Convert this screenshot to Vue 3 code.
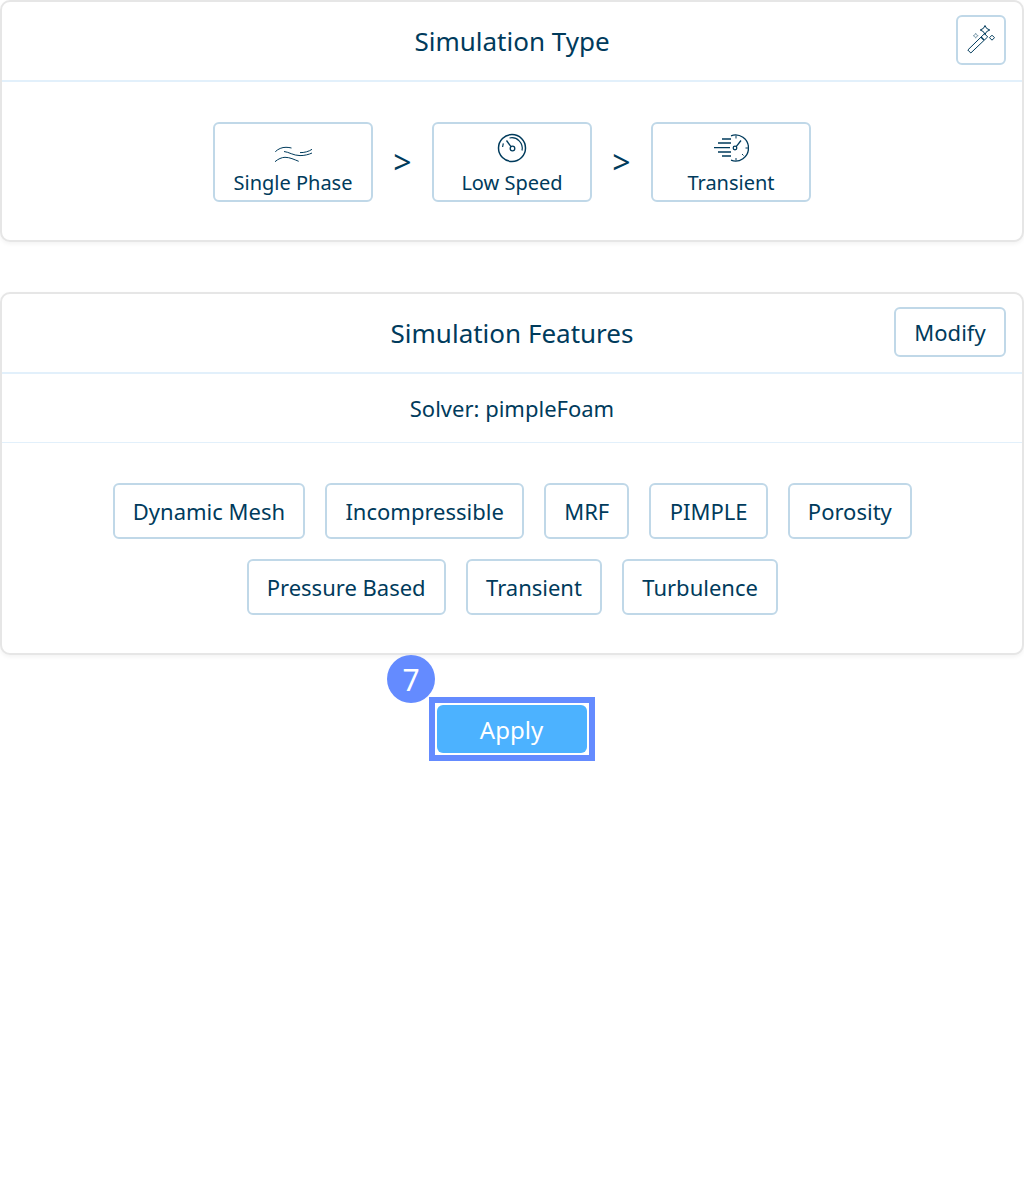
<template>
  <div class="page">
    <section class="card">
      <header class="card-head">
        <h2>Simulation Type</h2>
        <button class="head-btn icon-btn" title="Wizard">
          <svg width="28" height="30" viewBox="0 0 28 30" fill="none" stroke="#003b5c" stroke-width="1">
            <path d="M0.8 25 L17.500 8.700 L20.700 11.900 L3.800 28 Z" />
            <path d="M14 12 L17 15" stroke-width="1.500" />
            <path d="M18 0.500 L19.600 3.400 L22.800 5 L19.600 6.600 L18 9.500 L16.400 6.600 L13.200 5 L16.400 3.400 Z" />
            <path d="M25 10.200 L27.500 12.700 L25 15.200 L22.500 12.700 Z" />
            <path d="M8.700 8.200 L9.500 9.900 L11.200 10.700 L9.500 11.500 L8.700 13.200 L7.900 11.500 L6.200 10.700 L7.900 9.900 Z" stroke="#6f90a3" stroke-width="0.800" />
          </svg>
        </button>
      </header>
      <div class="type-row">
        <template v-for="(t, i) in types" :key="t.label">
          <span v-if="i > 0" class="sep">&gt;</span>
          <div class="type-box">
            <svg v-if="t.icon === 'wave'" width="40" height="30" viewBox="0 0 40 30" fill="none" stroke="#003b5c" stroke-width="1">
              <path d="M2.300 18.700 C5 16 9 14.200 13 14.300 C15 14.300 17 14.600 18.500 15" />
              <path d="M11 18.500 C16 19 20 22.500 27 22.600 C31 22.700 36 21.500 39 20" />
              <path d="M27 19.600 C31 19.800 36 18.500 39 16.300" />
              <path d="M2 28.700 C5 26 9 24.300 12 24.300 C17 24.300 21 26.500 25.700 28.300" />
            </svg>
            <svg v-else-if="t.icon === 'gauge'" width="30" height="30" viewBox="0 0 30 30" fill="none" stroke="#003b5c" stroke-width="1.500">
              <circle cx="15" cy="15" r="13.500" />
              <path d="M12.500 5 A10.500 10.500 0 0 1 25 17.500" stroke-width="1.200" />
              <path d="M6.300 10.300 L5.600 14" stroke-width="1.200" />
              <circle cx="15.500" cy="15.500" r="2.300" stroke-width="1.300" />
              <path d="M14 13.700 L9.500 7.500" stroke-width="1.300" />
            </svg>
            <svg v-else width="36" height="30" viewBox="0 0 36 30" fill="none" stroke="#003b5c" stroke-width="1.300">
              <path d="M18 2.800 A13 13 0 1 1 18 27.200" />
              <path d="M9 6 H18 M5 10 H18 M1 14.700 H17 M5 19 H18 M9 23 H18" />
              <circle cx="22" cy="15" r="1.800" />
              <path d="M23.200 13.600 L28 7.500" />
              <path d="M23 2.500 V5.500 M32.500 15 H35.500 M23 25 V27.500 M30.500 22.500 L29 21" stroke-width="1" />
            </svg>
            <span>{{ t.label }}</span>
          </div>
        </template>
      </div>
    </section>

    <section class="card features">
      <header class="card-head">
        <h2>Simulation Features</h2>
        <button class="head-btn modify">Modify</button>
      </header>
      <div class="solver">Solver: pimpleFoam</div>
      <div class="chips">
        <div v-for="(row, r) in chipRows" :key="r" class="chip-row">
          <span v-for="c in row" :key="c" class="chip">{{ c }}</span>
        </div>
      </div>
    </section>

    <div class="apply-wrap">
      <span class="badge">7</span>
      <div class="apply-outline">
        <button class="apply">Apply</button>
      </div>
    </div>
  </div>
</template>

<script setup>
const types = [
  { label: 'Single Phase', icon: 'wave' },
  { label: 'Low Speed', icon: 'gauge' },
  { label: 'Transient', icon: 'clock' },
]

const chipRows = [
  ['Dynamic Mesh', 'Incompressible', 'MRF', 'PIMPLE', 'Porosity'],
  ['Pressure Based', 'Transient', 'Turbulence'],
]
</script>

<style>
html,
body {
  margin: 0;
  background: #fff;
}
</style>

<style scoped>
.page {
  width: 1024px;
  min-height: 1200px;
  font-family: "Noto Sans", "Open Sans", sans-serif;
  color: #003b5c;
  box-sizing: border-box;
}

.card {
  border: 2px solid #e6e6e6;
  border-radius: 10px;
  box-shadow: 0 2px 4px rgba(0, 0, 0, 0.05);
  box-sizing: border-box;
  height: 242px;
  background: #fff;
}

.features {
  margin-top: 50px;
  height: 363px;
}

.card-head {
  height: 80px;
  border-bottom: 2px solid #e2f0fb;
  position: relative;
  display: flex;
  align-items: center;
  justify-content: center;
  box-sizing: border-box;
}

h2 {
  margin: 0;
  font-size: 26px;
  font-weight: 400;
  line-height: 32px;
}

.head-btn {
  position: absolute;
  right: 16px;
  top: 13px;
  height: 50px;
  padding: 0;
  border: 2px solid #c0d8e8;
  border-radius: 6px;
  background: #fff;
  color: #003b5c;
  font: 400 22px "Noto Sans", sans-serif;
  box-sizing: border-box;
}

.modify {
  width: 112px;
}

.icon-btn {
  width: 50px;
  display: flex;
  align-items: center;
  justify-content: center;
}

.type-row {
  display: flex;
  justify-content: center;
  align-items: center;
  padding-top: 40px;
}

.type-box {
  width: 160px;
  height: 80px;
  border: 2px solid #c0d8e8;
  border-radius: 6px;
  box-sizing: border-box;
  display: flex;
  flex-direction: column;
  align-items: center;
  justify-content: flex-end;
  font-size: 20px;
  line-height: 28px;
  padding-bottom: 3px;
}

.type-box svg {
  display: block;
  margin-bottom: 6px;
}

.sep {
  width: 59px;
  text-align: center;
  font-size: 32px;
  line-height: 38px;
}

.solver {
  height: 69px;
  border-bottom: 1px solid #e2f0fb;
  display: flex;
  align-items: center;
  justify-content: center;
  font-size: 22px;
  box-sizing: border-box;
}

.chips {
  padding: 40px 0 0 0.6px;
  display: flex;
  flex-direction: column;
  gap: 20px;
}

.chip-row {
  display: flex;
  justify-content: center;
  gap: 20px;
}

.chip {
  height: 56px;
  padding: 0 18.2px;
  border: 2px solid #c0d8e8;
  border-radius: 6px;
  display: flex;
  align-items: center;
  font-size: 22px;
  box-sizing: border-box;
}

.apply-wrap {
  width: 166px;
  margin: 42px auto 0;
  position: relative;
}

.badge {
  position: absolute;
  left: -42px;
  top: -42px;
  width: 48px;
  height: 48px;
  border-radius: 50%;
  background: #648bff;
  color: #fff;
  font-size: 30px;
  display: flex;
  align-items: center;
  justify-content: center;
}

.apply-outline {
  border: 6px solid #648bff;
  padding: 2px;
  box-sizing: border-box;
  height: 64px;
}

.apply {
  display: block;
  width: 100%;
  height: 48px;
  border: 0;
  border-radius: 6px;
  background: #4cb2ff;
  color: #fff;
  font: 400 24px "Noto Sans", sans-serif;
  padding: 0 1px 0 0;
}
</style>
